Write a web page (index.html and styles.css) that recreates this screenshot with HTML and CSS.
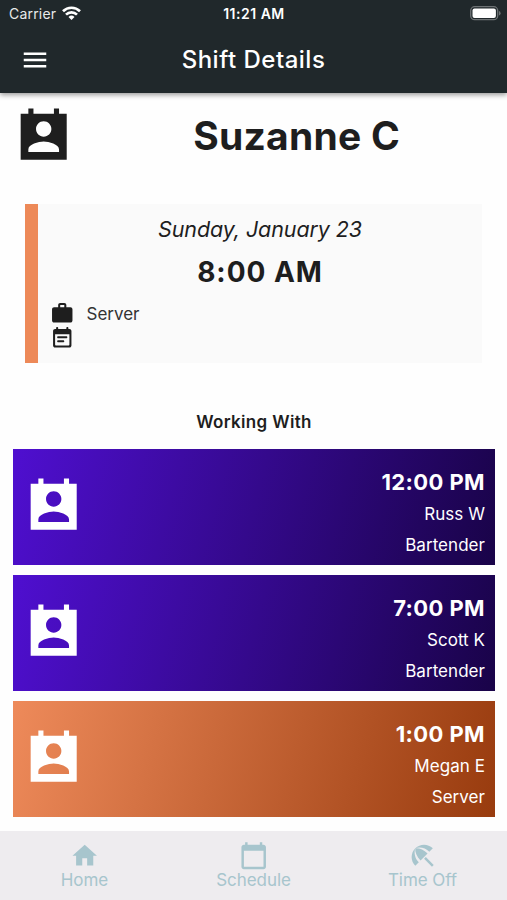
FILE: index.html
```html
<!DOCTYPE html>
<html lang="en">
<head>
<meta charset="utf-8">
<title>Shift Details</title>
<link rel="stylesheet" href="styles.css">
</head>
<body>
<svg class="defs" width="0" height="0" aria-hidden="true">
  <symbol id="contact" viewBox="0 0 24 24"><path d="M21 3h-3V1h-2v2H8V1H6v2H3v18h18V3zm-9 3c1.66 0 3 1.34 3 3s-1.34 3-3 3-3-1.34-3-3 1.34-3 3-3zm6 12H6v-1c0-2 4-3.1 6-3.1s6 1.1 6 3.1v1z"/></symbol>
</svg>
<div class="app">
  <header class="top">
    <div class="status">
      <div class="carrier"><span class="carrier-name">Carrier</span>
        <svg class="wifi" viewBox="0 0 19 14"><g fill="none" stroke="currentColor" stroke-width="2.7"><path d="M1 5.2a12.2 12.2 0 0 1 17 0"/><path d="M4 8.6a7.9 7.9 0 0 1 11 0"/></g><path d="M9.5 14l-3-3.1a4.3 4.3 0 0 1 6 0z"/></svg>
      </div>
      <span class="clock">11:21 AM</span>
      <svg class="battery" viewBox="0 0 31 15"><rect x=".7" y=".7" width="27" height="13" rx="4" fill="none" stroke="#6d7274" stroke-width="1.3"/><rect x="2.5" y="2.5" width="23.4" height="9.4" rx="2" fill="#fff"/><path d="M29 5v4.600q1.600-.6 1.600-2.300T29 5z" fill="#6d7274"/></svg>
    </div>
    <div class="bar">
      <svg class="menu" viewBox="0 0 24 24"><path d="M3 18h18v-2H3v2zm0-5h18v-2H3v2zm0-7v2h18V6H3z"/></svg>
      <h1 class="title">Shift Details</h1>
    </div>
  </header>
  <main class="content">
    <section class="person">
      <svg class="contact"><use href="#contact"/></svg>
      <h2 class="name">Suzanne C</h2>
    </section>
    <section class="shift">
      <p class="date">Sunday, January 23</p>
      <p class="start">8:00 AM</p>
      <div class="row"><svg class="small" viewBox="0 0 24 24"><path d="M20 6h-4V4c0-1.110-.89-2-2-2h-4c-1.110 0-2 .89-2 2v2H4c-1.110 0-2 .89-2 2v11c0 1.110.89 2 2 2h16c1.110 0 2-.89 2-2V8c0-1.110-.89-2-2-2zm-6 0h-4V4h4v2z"/></svg><span class="role">Server</span></div>
      <div class="row"><svg class="small" viewBox="0 0 24 24"><path d="M16 10H8c-.55 0-1 .45-1 1s.45 1 1 1h8c.55 0 1-.45 1-1s-.45-1-1-1zm3-7h-1V2c0-.55-.45-1-1-1s-1 .45-1 1v1H8V2c0-.55-.45-1-1-1s-1 .45-1 1v1H5c-1.110 0-2 .9-2 2v14c0 1.100.89 2 2 2h14c1.100 0 2-.9 2-2V5c0-1.100-.9-2-2-2zm-1 16H6c-.55 0-1-.45-1-1V8h14v10c0 .55-.45 1-1 1zm-5-5H8c-.55 0-1 .45-1 1s.45 1 1 1h5c.55 0 1-.45 1-1s-.45-1-1-1z"/></svg></div>
    </section>
    <h3 class="heading">Working With</h3>
    <section class="list">
      <article class="card bartender"><svg class="contact"><use href="#contact"/></svg>
        <div class="info"><strong class="time">12:00 PM</strong><span class="who">Russ W</span><span class="job">Bartender</span></div></article>
      <article class="card bartender"><svg class="contact"><use href="#contact"/></svg>
        <div class="info"><strong class="time">7:00 PM</strong><span class="who">Scott K</span><span class="job">Bartender</span></div></article>
      <article class="card server"><svg class="contact"><use href="#contact"/></svg>
        <div class="info"><strong class="time">1:00 PM</strong><span class="who">Megan E</span><span class="job">Server</span></div></article>
    </section>
  </main>
  <nav class="tabs">
    <a class="tab"><svg class="tab-icon" viewBox="0 0 24 24"><path d="M10 20v-6h4v6h5v-8h3L12 3 2 12h3v8z"/></svg><span>Home</span></a>
    <a class="tab"><svg class="tab-icon" viewBox="0 0 24 24"><path d="M20 3h-1V1h-2v2H7V1H5v2H4c-1.100 0-2 .9-2 2v16c0 1.100.9 2 2 2h16c1.100 0 2-.9 2-2V5c0-1.100-.9-2-2-2zm0 18H4V8h16v13z"/></svg><span>Schedule</span></a>
    <a class="tab"><svg class="tab-icon" viewBox="0 0 24 24"><path d="M13.127 14.56l1.430-1.430 6.440 6.443L19.570 21zM17.420 8.830l2.860-2.860c-3.950-3.950-10.350-3.960-14.300-.02 3.930-1.300 8.310-.25 11.440 2.880zM5.950 5.980c-3.940 3.950-3.930 10.350.02 14.300l2.860-2.860C5.700 14.290 4.650 9.910 5.950 5.980zM5.970 5.960l-.01.01c-.38 3.010 1.170 6.880 4.300 10.020l5.730-5.730c-3.130-3.130-7.010-4.680-10.020-4.300z"/></svg><span>Time Off</span></a>
  </nav>
</div>
</body>
</html>
```

FILE: styles.css
```css
* { box-sizing: border-box; margin: 0; padding: 0; }
body { font-family: Inter, "Liberation Sans", sans-serif; background: #fefefe; color: #1e1e1e; }
svg { display: block; flex: none; fill: currentColor; }
.defs { position: absolute; }
.app { display: flex; flex-direction: column; height: 900px; overflow: hidden; }

.top { height: 93px; flex: none; background: #20282b; color: #fff; box-shadow: 0 2px 5px rgba(0, 0, 0, .4); }
.status { display: grid; grid-template-columns: 1fr auto 1fr; align-items: center; height: 27px; padding: 0 6px 0 9px; }
.carrier { display: flex; align-items: center; gap: 6px; color: #e8eaea; }
.carrier-name { font-size: 14px; letter-spacing: .2px; line-height: 27px; }
.wifi { width: 19px; height: 14px; color: #fff; margin-top: -2px; }
.clock { font-size: 14px; font-weight: 600; letter-spacing: .5px; margin-right: 2px; }
.battery { width: 31px; height: 15px; justify-self: end; }
.bar { display: grid; grid-template-columns: 1fr auto 1fr; align-items: center; height: 65px; padding: 0 20px; }
.menu { width: 30px; height: 30px; }
.title { font-size: 24px; font-weight: 500; letter-spacing: .5px; }

.content { flex: 1; }
.person { display: flex; align-items: center; height: 86px; padding: 0 13px; }
.contact { width: 61.4px; height: 61.4px; }
.person .contact { margin-top: 1px; }
.name { flex: 1; text-align: center; font-size: 39px; font-weight: 700; letter-spacing: .25px; padding-left: 25px; margin-top: -1px; }

.shift { height: 159px; margin: 25px 25px 0; border-left: 13px solid #ed8958; background: #fafafa; padding: 10px 12px; }
.date { text-align: center; font-size: 21.5px; line-height: 31px; font-style: italic; letter-spacing: -.1px; }
.start { text-align: center; font-size: 28px; font-weight: 700; line-height: 32px; margin-top: 11px; letter-spacing: .95px; }
.row { display: flex; align-items: center; height: 24.5px; gap: 12px; }
.start + .row { margin-top: 13px; }
.small { width: 24.5px; height: 24.5px; }
.role { font-size: 17px; letter-spacing: 0; color: #333; padding-top: 1px; }

.heading { margin-top: 46px; text-align: center; font-size: 17px; line-height: 26px; font-weight: 600; letter-spacing: .35px; padding-left: 1px; }
.list { display: grid; gap: 10px; padding: 14px 12px 0 13px; }
.card { display: flex; justify-content: space-between; height: 116px; padding: 23px 10px 0 10px; color: #fff; }
.card .contact { margin-top: 4.4px; }
.bartender { background: linear-gradient(105deg, #4f0fd0, #190348); }
.server { background: linear-gradient(105deg, #ee8a5a, #983b0e); }
.info { display: flex; flex-direction: column; text-align: right; }
.time { font-size: 22px; font-weight: 700; line-height: 20px; letter-spacing: .4px; margin-bottom: 7px; }
.who, .job { font-size: 17px; line-height: 30.6px; letter-spacing: .05px; }

.tabs { display: grid; grid-template-columns: repeat(3, 1fr); height: 69px; flex: none; background: #eeecef; color: #a7c5cd; }
.tab { display: flex; flex-direction: column; align-items: center; padding-top: 10px; font-size: 17px; line-height: 21px; letter-spacing: -.05px; }
.tab-icon { width: 29.4px; height: 29.4px; }
```
